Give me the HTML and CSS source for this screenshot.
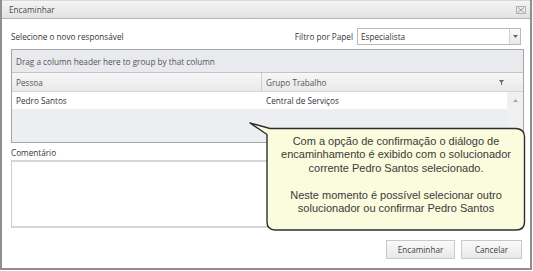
FILE: index.html
```html
<!DOCTYPE html>
<html lang="pt">
<head>
<meta charset="utf-8">
<title>Encaminhar</title>
<link rel="stylesheet" href="styles.css">
</head>
<body>
<div class="dialog">
  <div class="titlebar">
    <span class="title">Encaminhar</span>
    <svg class="close" width="10" height="8" viewBox="0 0 10 8"><rect x="0.5" y="0.5" width="9" height="7" fill="none" stroke="#b0b0b0"/><path d="M2 1.5 L8 6.5 M8 1.5 L2 6.5" stroke="#a0a0a0" stroke-width="1"/></svg>
  </div>
  <div class="content">
    <div class="toprow">
      <span class="label">Selecione o novo responsável</span>
      <div class="filter">
        <span class="label">Filtro por Papel</span>
        <div class="select">
          <span class="select-text">Especialista</span>
          <span class="select-btn"><svg width="5" height="3" viewBox="0 0 5 3"><path d="M0 0 H5 L2.5 3 Z" fill="#666"/></svg></span>
        </div>
      </div>
    </div>
    <div class="grid">
      <div class="grouppanel">Drag a column header here to group by that column</div>
      <div class="header">
        <div class="cell c1">Pessoa</div>
        <div class="cell c2"><span>Grupo Trabalho</span><svg class="funnel" width="5" height="5" viewBox="0 0 5 5"><path d="M0 0 H5 L3 2.5 V5 H2 V2.5 Z" fill="#666"/></svg></div>
      </div>
      <div class="gbody">
        <div class="rows">
          <div class="row">
            <div class="cell c1">Pedro Santos</div>
            <div class="cell c2">Central de Serviços</div>
          </div>
        </div>
        <div class="scroll"><svg width="5" height="3" viewBox="0 0 5 3"><path d="M0 3 H5 L2.5 0 Z" fill="#aaa"/></svg></div>
      </div>
    </div>
    <div class="comment-label">Comentário</div>
    <div class="textarea"></div>
    <div class="buttons">
      <button class="btn btn-primary">Encaminhar</button>
      <button class="btn">Cancelar</button>
    </div>
  </div>
  <div class="callout">
    <svg class="callout-shape" width="285" height="118" viewBox="0 0 285 118">
      <path d="M5 5 L25 10.5 L271 10.5 Q279.5 11 279.5 19 L279.5 104 Q279.5 112 271 112 L30 112 Q22 111.5 22 104 L22 16.5 Z" fill="#fbfbdd" stroke="#2e2e2e" stroke-width="1.4" stroke-linejoin="round"/>
    </svg>
    <div class="callout-text">
      <p>Com a opção de confirmação o diálogo de<br>encaminhamento é exibido com o solucionador<br>corrente Pedro Santos selecionado.</p>
      <p>Neste momento é possível selecionar outro<br>solucionador ou confirmar Pedro Santos</p>
    </div>
  </div>
</div>
</body>
</html>
```

FILE: styles.css
```css
* { box-sizing: border-box; }
html, body { margin: 0; padding: 0; background: #ffffff; }
body {
  font-family: "Open Sans", "DejaVu Sans", sans-serif;
  font-size: 8.2px;
  color: #363636;
}
.dialog {
  position: relative;
  width: 532px;
  height: 270px;
  border-left: 2px solid #8f8f8f;
  border-right: 2px solid #8f8f8f;
  border-bottom: 2px solid #8f8f8f;
  background: #ffffff;
}
.titlebar {
  height: 19px;
  display: flex;
  align-items: center;
  justify-content: space-between;
  padding: 0 4px 1px 7px;
  background: linear-gradient(#f4f4f4, #e2e2e2);
  border-top: 1px solid #d8d8d8;
  border-bottom: 1px solid #b3b3b3;
  color: #4a4a4a;
}
.close { display: block; margin-top: 2px; }
.content {
  padding: 9px 6px 0 9px;
}
.toprow {
  display: flex;
  align-items: center;
  justify-content: space-between;
  height: 17px;
}
.filter {
  display: flex;
  align-items: center;
  gap: 4px;
  margin-right: 3px;
}
.select {
  width: 164px;
  height: 17px;
  border: 1px solid #b9b9b9;
  display: flex;
  align-items: center;
  justify-content: space-between;
  background: #fff;
}
.select-text { padding-left: 3px; color: #333; }
.select-btn {
  width: 11px;
  height: 15px;
  border-left: 1px solid #d0d0d0;
  background: linear-gradient(#fafafa, #e8e8e8);
  display: flex;
  align-items: center;
  justify-content: center;
}
.select-btn svg { display: block; }
.grid {
  margin-top: 4px;
  height: 94px;
  border: 1px solid #a6a6a6;
  display: flex;
  flex-direction: column;
  background: #eceef1;
}
.grouppanel {
  height: 23px;
  display: flex;
  align-items: center;
  padding-left: 4px;
  background: #e8eaee;
  border-bottom: 1px solid #c4c4c4;
  color: #555;
}
.header {
  height: 19px;
  display: flex;
  background: linear-gradient(#f7f7f7, #e9e9e9);
  border-bottom: 1px solid #d4d4d4;
  color: #555;
}
.cell {
  display: flex;
  align-items: center;
  padding-left: 4px;
}
.c1 { width: 250px; border-right: 1px solid #d0d0d0; }
.header .c2 {
  flex: 1;
  justify-content: space-between;
  padding-right: 19px;
}
.funnel { display: block; }
.gbody { flex: 1; display: flex; }
.rows { flex: 1; }
.row {
  height: 17px;
  display: flex;
  background: #ffffff;
  color: #333;
}
.row .c1 { border-right: none; width: 250px; }
.row .c2 { flex: 1; }
.scroll {
  width: 16px;
  display: flex;
  justify-content: center;
  padding-top: 7px;
  background: #eef0f2;
}
.scroll svg { display: block; }
.comment-label {
  height: 17px;
  padding-top: 4px;
  line-height: 11px;
}
.textarea {
  height: 68px;
  border: 1px solid #cfcfcf;
  border-top: 2px solid #d6d6d6;
  border-bottom: 2px solid #d6d6d6;
  background: #fff;
}
.buttons {
  margin-top: 12px;
  display: flex;
  justify-content: flex-end;
  gap: 6px;
  padding-right: 2px;
}
.btn {
  font-family: "Open Sans", "DejaVu Sans", sans-serif;
  font-size: 8.2px;
  color: #444;
  height: 19px;
  border: 1px solid #c9c9c9;
  background: linear-gradient(#fafafa, #e8e8e8);
  padding: 0;
  width: 61px;
}
.btn-primary { width: 69px; }
.callout {
  position: absolute;
  left: 243px;
  top: 118px;
  width: 285px;
  height: 118px;
}
.callout-shape { position: absolute; left: 0; top: 0; display: block; }
.callout-text {
  position: absolute;
  left: 22px;
  top: 17px;
  width: 258px;
  text-align: center;
  font-family: "Liberation Sans", Arial, sans-serif;
  font-size: 11px;
  line-height: 13.4px;
  color: #3a3a3a;
}
.callout-text p { margin: 0 0 13.4px 0; }
```
